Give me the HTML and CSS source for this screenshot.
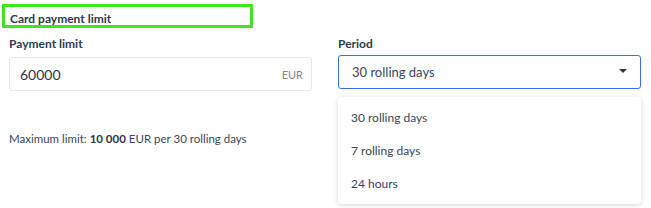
FILE: index.html
```html
<!DOCTYPE html>
<html lang="en">

<head>
    <meta charset="UTF-8">
    <meta name="viewport" content="width=device-width, initial-scale=1.0">
    <title>Card payment limit</title>
    <link rel="stylesheet" href="styles.css">
</head>

<body>
    <div class="section">
        <div class="section-title">Card payment limit</div>

        <div class="fields">
            <!-- Payment limit -->
            <div class="field">
                <label class="label" for="limit">Payment limit</label>
                <div class="input-box">
                    <input type="text" id="limit" value="60000">
                    <span class="suffix">EUR</span>
                </div>
                <p class="hint">Maximum limit: <b>10&#8239;000</b> EUR per 30 rolling days</p>
            </div>

            <!-- Period -->
            <div class="field period">
                <div class="label">Period</div>
                <div class="select">
                    <span>30 rolling days</span>
                    <svg class="caret" width="8" height="4" viewBox="0 0 8 4">
                        <path d="M0 0 H8 L4 4 Z" fill="#2b3544" />
                    </svg>
                </div>
                <ul class="menu">
                    <li>30 rolling days</li>
                    <li>7 rolling days</li>
                    <li>24 hours</li>
                </ul>
            </div>
        </div>
    </div>
</body>

</html>
```

FILE: styles.css
```css
* {
    margin: 0;
    padding: 0;
    box-sizing: border-box;
}

body {
    font-family: Lato, "Open Sans", sans-serif;
    background-color: #fff;
    color: #2b3544;
    min-height: 208px;
}

.section {
    padding: 4px 0 0 2px;
}

.section-title {
    width: 251px;
    height: 24px;
    border: 3px solid #3ee61c;
    padding: 4px 0 0 5px;
    font-size: 12px;
    font-weight: bold;
    color: #2d3a4c;
}

.fields {
    display: flex;
    padding: 8px 0 0 7px;
    gap: 26px;
}

.field {
    width: 303px;
}

.label {
    display: block;
    font-size: 12px;
    font-weight: bold;
    color: #2d3a4c;
    height: 20px;
}

.input-box {
    display: flex;
    align-items: center;
    height: 34px;
    border: 1px solid #e4e6ee;
    border-radius: 3px;
    padding: 0 8px 0 10px;
    margin-top: 1px;
}

.input-box input {
    flex: 1;
    border: none;
    outline: none;
    font-family: inherit;
    font-size: 14px;
    color: #2b3544;
    background: none;
}

.suffix {
    font-size: 11px;
    color: #7d8594;
}

.hint {
    margin-top: 41px;
    font-size: 11.5px;
    color: #3b4658;
}

.hint b {
    color: #2b3544;
}

.period {
    position: relative;
}

.select {
    display: flex;
    align-items: center;
    justify-content: space-between;
    height: 34px;
    border: 1px solid #3a6ee6;
    border-radius: 3px;
    padding: 0 13px 0 13px;
    margin-top: -1px;
    font-size: 13px;
    color: #3b4658;
}

.caret {
    margin-bottom: 3px;
}

.menu {
    position: absolute;
    top: 61px;
    left: 0;
    width: 303px;
    list-style: none;
    background: #fff;
    border-radius: 4px;
    box-shadow: 0 1px 5px rgba(20, 30, 50, 0.18);
    padding: 4px 0;
}

.menu li {
    height: 33px;
    line-height: 33px;
    padding-left: 13px;
    font-size: 12px;
    color: #3b4658;
}
```
